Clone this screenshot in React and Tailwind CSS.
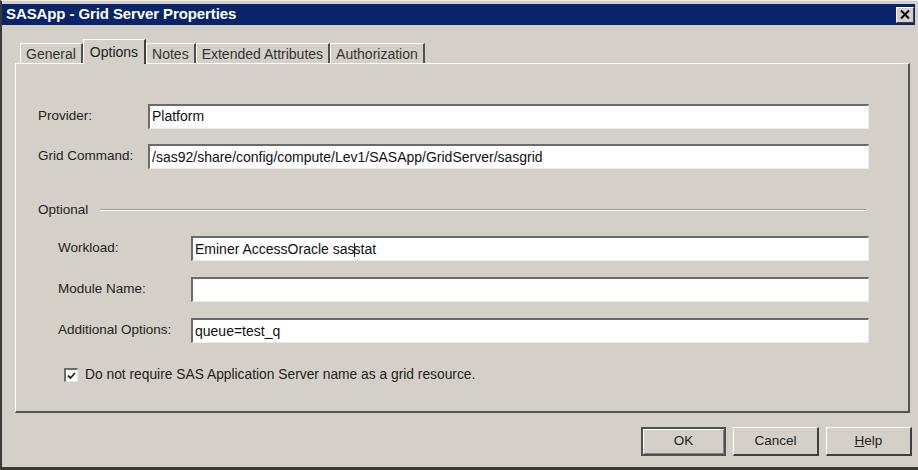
import React from "react";

const sunken =
  "bg-white border-t-2 border-l-2 border-t-[#6b6b6b] border-l-[#6b6b6b] border-b border-r border-b-[#ececec] border-r-[#ececec]";

function Field({ label, value, labelW, inputW, className = "" }) {
  return (
    <div className={"flex items-center " + className}>
      <div className="shrink-0 text-[13.5px] text-[#222]" style={{ width: labelW }}>
        {label}
      </div>
      <div
        className={sunken + " h-[25px] flex items-center pl-[2px] text-[14px] text-[#111]"}
        style={{ width: inputW }}
      >
        {value}
      </div>
    </div>
  );
}

function Tab({ children, active }) {
  if (active) {
    return (
      <div className="relative z-10 h-[25px] -mb-px px-[6px] pt-[2px] bg-[#d4d0c8] border-t border-l border-t-white border-l-white border-r-2 border-r-[#404040] text-[14px] text-[#222]">
        {children}
      </div>
    );
  }
  return (
    <div className="h-[20px] px-[5px] pt-[1px] border-t border-l border-t-white border-l-white border-r-2 border-r-[#505050] text-[14px] text-[#333] leading-[19px]">
      {children}
    </div>
  );
}

function Button({ children, def }) {
  return (
    <button
      type="button"
      className={
        "h-[29px] text-[13.5px] text-[#222] bg-[#d4d0c8] flex items-center justify-center " +
        (def
          ? "w-[85px] border-2 border-[#505050] shadow-[inset_1px_1px_0_#fff,inset_-1px_-1px_0_#808080]"
          : "w-[86px] border-t border-l border-t-white border-l-white border-b-2 border-r-2 border-b-[#404040] border-r-[#404040]")
      }
    >
      {children}
    </button>
  );
}

export default function App() {
  return (
    <div className="w-[918px] h-[470px] overflow-hidden bg-[#d4d0c8] border-l-2 border-l-[#3a3a3a] border-b-[3px] border-b-[#3a3a3a] border-t border-t-[#eeeeee] font-['Liberation_Sans',Arial,sans-serif]">
      <div className="mt-[3px] mr-[3px] h-[21px] bg-[#0a246a] flex items-center justify-between pl-[4px] pr-[1px]">
        <span className="text-white font-bold text-[15px] tracking-[-0.1px]">
          SASApp - Grid Server Properties
        </span>
        <div className="w-[18px] h-[16px] bg-[#d4d0c8] border-t border-l border-t-white border-l-white border-b border-r border-b-[#404040] border-r-[#404040] flex items-center justify-center">
          <svg width="10" height="9" viewBox="0 0 10 9">
            <path d="M1 0.5 L9 8.5 M9 0.5 L1 8.5" stroke="#000" strokeWidth="2" />
          </svg>
        </div>
      </div>

      <div className="mt-[14px] ml-[18px] h-[24px] flex items-end">
        <Tab>General</Tab>
        <Tab active>Options</Tab>
        <Tab>Notes</Tab>
        <Tab>Extended Attributes</Tab>
        <Tab>Authorization</Tab>
      </div>

      <div className="ml-[13px] w-[895px] h-[350px] border-t border-l border-t-white border-l-white border-r-2 border-b-2 border-r-[#555] border-b-[#555] pt-[39px] pl-[22px]">
        <Field label="Provider:" value="Platform" labelW={110} inputW={721} className="h-[26px]" />
        <Field
          label="Grid Command:"
          value="/sas92/share/config/compute/Lev1/SASApp/GridServer/sasgrid"
          labelW={110}
          inputW={721}
          className="mt-[15px] h-[25px]"
        />

        <div className="mt-[33px] h-[16px] flex items-center">
          <span className="text-[13.5px] text-[#222]">Optional</span>
          <div className="ml-[12px] w-[766px] border-t border-t-[#a5a29b] border-b border-b-white" />
        </div>

        <div className="pl-[20px]">
          <Field
            label="Workload:"
            value={
              <span>
                Eminer AccessOracle sas<span className="inline-block w-px h-[14px] bg-[#222] align-middle -mx-px" />stat
              </span>
            }
            labelW={133}
            inputW={678}
            className="mt-[18px]"
          />
          <Field label="Module Name:" value="" labelW={133} inputW={678} className="mt-[16px]" />
          <Field
            label="Additional Options:"
            value="queue=test_q"
            labelW={133}
            inputW={678}
            className="mt-[16px]"
          />

          <div className="mt-[24px] ml-[6px] flex items-center h-[16px]">
            <div className="w-[14px] h-[14px] bg-white border-t-2 border-l-2 border-t-[#6b6b6b] border-l-[#6b6b6b] border-b border-r border-b-[#e8e8e8] border-r-[#e8e8e8] flex items-center justify-center">
              <svg width="9" height="8" viewBox="0 0 9 8">
                <path d="M1 3.5 L3.5 6 L8 1" stroke="#222" strokeWidth="1.8" fill="none" />
              </svg>
            </div>
            <span className="ml-[7px] text-[13.8px] text-[#222]">
              Do not require SAS Application Server name as a grid resource.
            </span>
          </div>
        </div>
      </div>

      <div className="mt-[14px] mr-[6px] flex justify-end gap-[7px]">
        <Button def>OK</Button>
        <Button>Cancel</Button>
        <Button>
          <span>
            <span className="underline">H</span>elp
          </span>
        </Button>
      </div>
    </div>
  );
}
